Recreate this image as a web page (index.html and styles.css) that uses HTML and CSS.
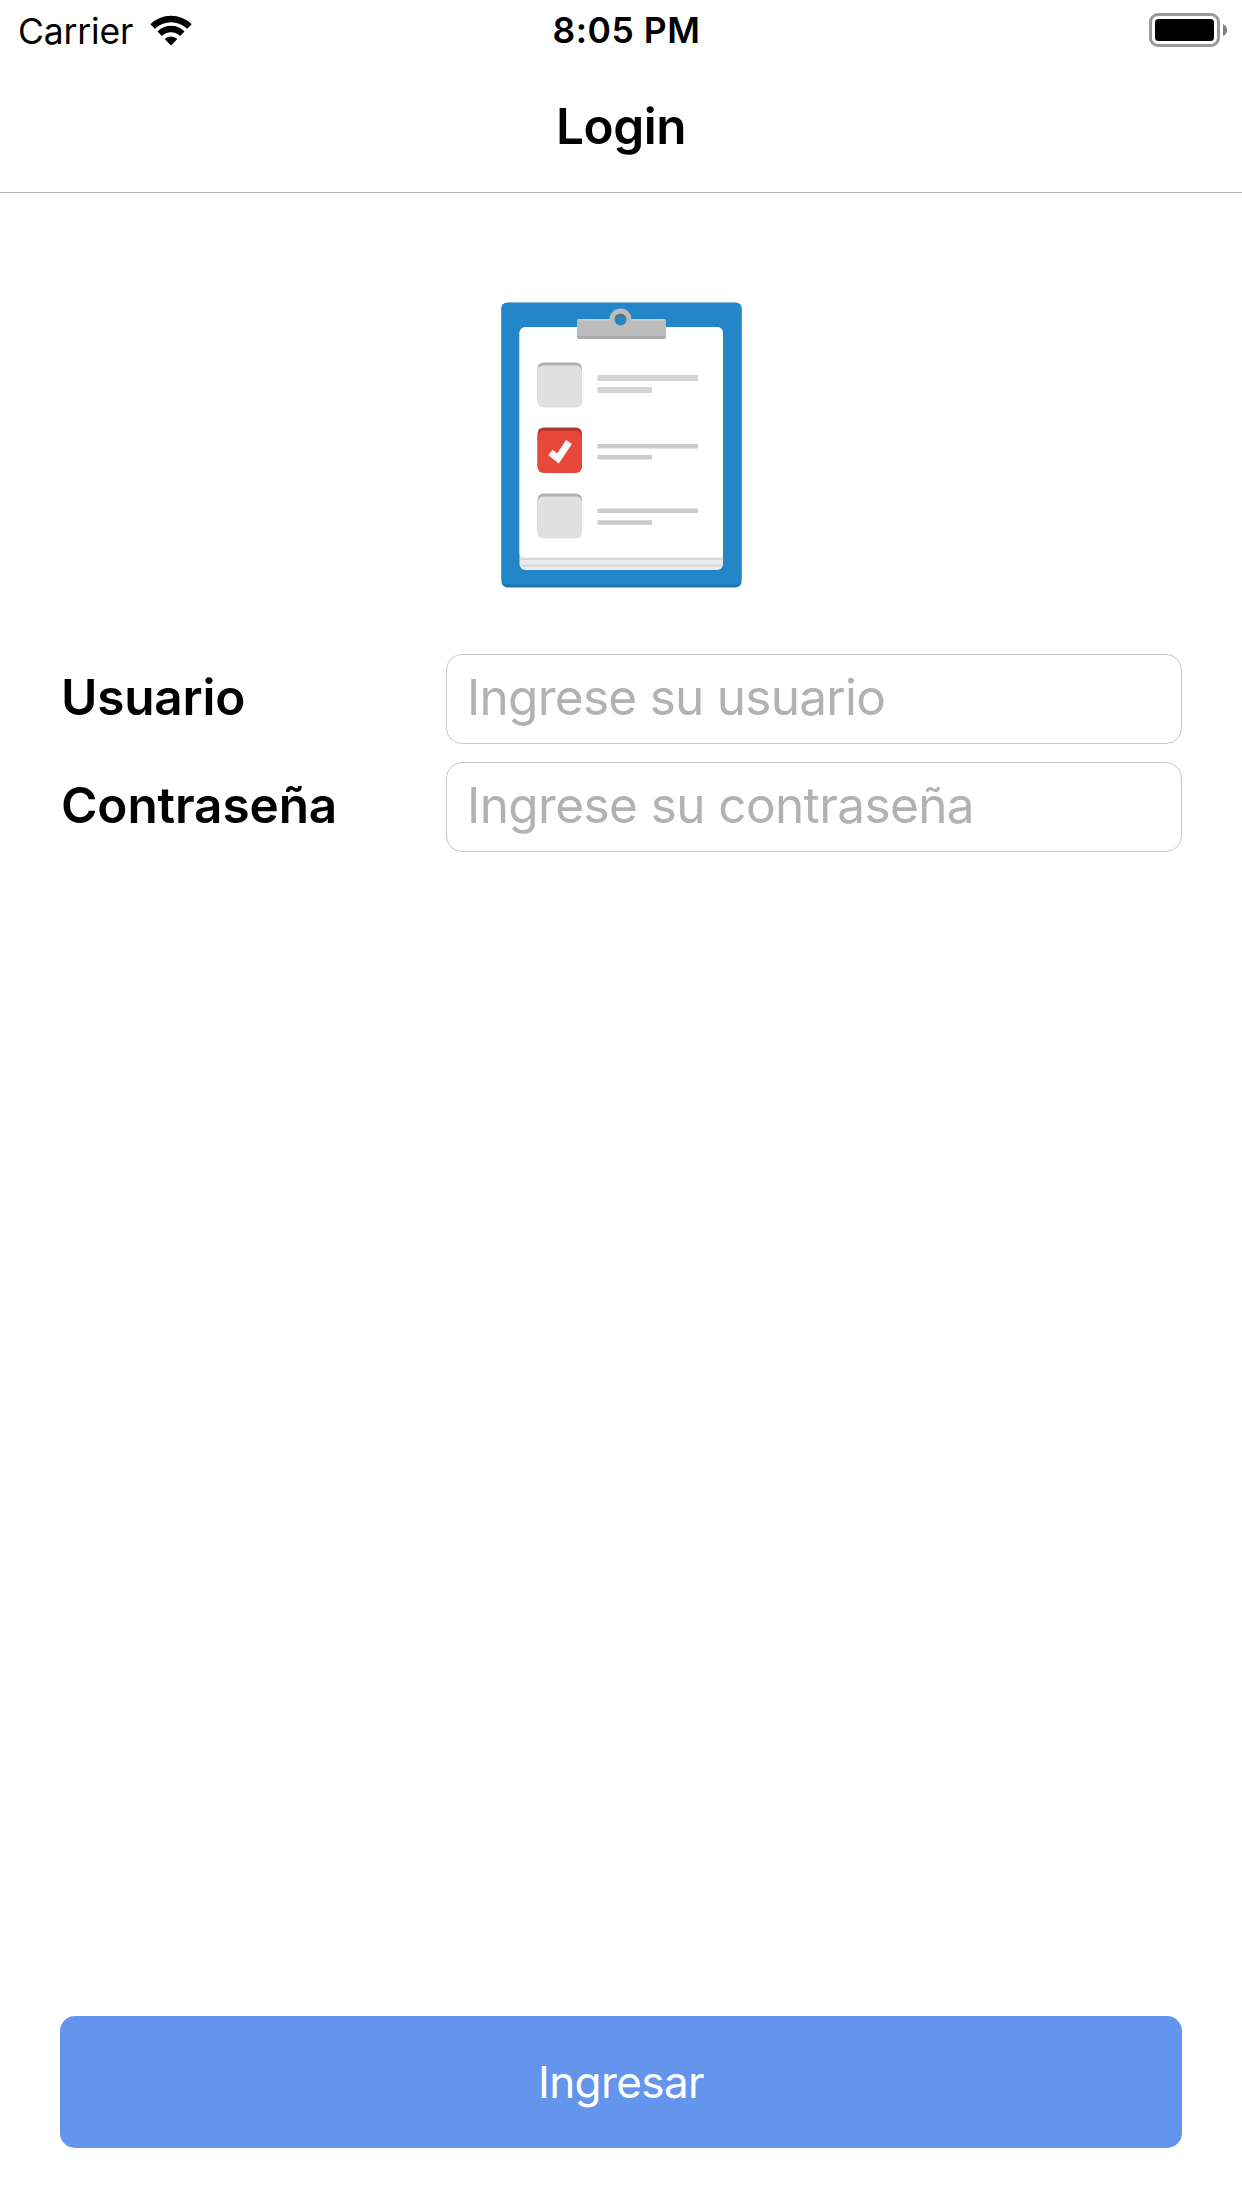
FILE: index.html
```
<!DOCTYPE html>
<html lang="es">
<head>
<meta charset="utf-8">
<title>Login</title>
<link rel="stylesheet" href="styles.css">
</head>
<body>
<div class="screen">
  <div class="status-bar">
    <div class="status-left">
      <span class="carrier">Carrier</span>
      <svg class="wifi" width="44" height="32" viewBox="-22 -30 44 32">
        <path d="M-18.4-18.4A26 26 0 0 1 18.4-18.4M-11.3-11.3A16 16 0 0 1 11.3-11.3" fill="none" stroke="#000" stroke-width="6.4"/>
        <path d="M0 .5-6.4-5.9A9 9 0 0 1 6.4-5.9Z"/>
      </svg>
    </div>
    <span class="clock">8:05 PM</span>
    <div class="status-right">
      <svg width="80" height="34" viewBox="0 0 80 34">
        <rect x="1.5" y="1.5" width="68" height="31" rx="7.5" fill="none" stroke="#999" stroke-width="3"/>
        <rect x="6" y="6" width="59" height="22" rx="3.5"/>
        <path d="M74 11Q78 13 78 17T74 23Z" fill="#808080"/>
      </svg>
    </div>
  </div>
  <header class="nav-bar"><h1 class="nav-title">Login</h1></header>
  <main class="content">
    <svg class="logo" width="264" height="300" viewBox="489 294 264 300">
      <rect x="501.500" y="302.500" width="240" height="285" rx="6" fill="#1b75b3"/>
      <rect x="501.500" y="303" width="240" height="281.500" rx="5" fill="#2386c8"/>
      <rect x="519.500" y="327" width="203.500" height="243" rx="6" fill="#ececec"/>
      <path d="M520 559H722.500M521 565.500H721.500" stroke="#d6d6d6" stroke-width="2"/>
      <path d="M525.500 327H717A6 6 0 0 1 723 333V552Q723 557.500 718 557.500H524.500Q519.500 557.500 519.500 552V333A6 6 0 0 1 525.500 327Z" fill="#fff"/>
      <rect x="577" y="319" width="89" height="20" rx="2" fill="#a9a9a9"/>
      <rect x="577" y="319" width="89" height="17" rx="2" fill="#bcbcbc"/>
      <path d="M578.500 319.800H664.500" stroke="#d0cbc8" stroke-width="1.600"/>
      <circle cx="620.500" cy="319.500" r="11" fill="#bcbcbc"/>
      <circle cx="620.500" cy="319.500" r="6" fill="#2386c8"/>
      <path d="M614.800 318.500A6 6 0 0 1 626.200 318.500Q620.500 314.500 614.800 318.500Z" fill="#666c72"/>
      <rect x="537.500" y="362.500" width="44.500" height="43" rx="6" fill="#b0b0b0"/>
      <rect x="537.500" y="365.500" width="44.500" height="42" rx="6" fill="#e0e0e0"/>
      <rect x="537.500" y="427.500" width="44.500" height="43" rx="6" fill="#b9382d"/>
      <rect x="537.500" y="431" width="44.500" height="42" rx="6" fill="#e8483a"/>
      <path d="M550.500 452.500L558 458.500L569 442" fill="none" stroke="#fff" stroke-width="7"/>
      <rect x="537.500" y="493.500" width="44.500" height="43" rx="6" fill="#b0b0b0"/>
      <rect x="537.500" y="496.500" width="44.500" height="42" rx="6" fill="#e0e0e0"/>
      <path d="M597.500 378H698M597.500 390H652" stroke="#d5d5d5" stroke-width="6"/>
      <path d="M597.500 446.200H698M597.500 457.300H652M597.500 510.700H698M597.500 522.500H652" stroke="#cbcbcb" stroke-width="4.600"/>
    </svg>
    <form class="form">
      <div class="row">
        <label class="label label-user" for="user">Usuario</label>
        <input class="field field-user" id="user" type="text" placeholder="Ingrese su usuario">
      </div>
      <div class="row">
        <label class="label label-pass" for="pass">Contraseña</label>
        <input class="field field-pass" id="pass" type="password" placeholder="Ingrese su contraseña">
      </div>
    </form>
    <button class="submit" type="button">Ingresar</button>
  </main>
</div>
</body>
</html>
```
FILE: styles.css
```
* { box-sizing: border-box; }

body {
  margin: 0;
  background: #fff;
  color: #000;
  font-family: Inter, "Liberation Sans", sans-serif;
}

.screen {
  display: flex;
  flex-direction: column;
  width: 1242px;
  height: 2208px;
}

.status-bar {
  display: grid;
  grid-template-columns: 1fr auto 1fr;
  align-items: center;
  height: 60px;
  padding: 2px 13px 0 18px;
  line-height: 58px;
}

.status-left { display: flex; align-items: center; gap: 16px; }
.status-right { display: flex; justify-content: flex-end; padding-bottom: 3px; }
.wifi { margin-top: -1px; }
.carrier { font-size: 35.5px; letter-spacing: -0.15px; }
.clock {
  margin-left: 6px;
  padding-bottom: 1px;
  font-size: 35.5px;
  font-weight: 600;
  letter-spacing: 0.5px;
}

.nav-bar {
  display: flex;
  align-items: center;
  justify-content: center;
  height: 133px;
  border-bottom: 1px solid #b2b2b2;
}

.nav-title {
  margin: 0;
  font-size: 49.5px;
  font-weight: 600;
  letter-spacing: -0.45px;
  line-height: 60px;
}

.content {
  display: flex;
  flex: 1;
  flex-direction: column;
  padding: 101px 60px 60px;
}

/* The logo artwork has softened edges */
.logo { align-self: center; filter: blur(0.7px); }

.form {
  display: flex;
  flex-direction: column;
  gap: 18px;
  margin-top: 60px;
}

.row {
  display: grid;
  grid-template-columns: 386px 1fr;
  align-items: center;
  height: 90px;
}

.label {
  padding: 0 0 4px 1px;
  font-size: 49.5px;
  font-weight: 600;
  line-height: 60px;
}

.label-user { letter-spacing: -0.2px; }
.label-pass { letter-spacing: -0.1px; }

.field {
  width: 100%;
  height: 90px;
  padding: 0 20px 4px;
  border: 1px solid #c8c8c8;
  border-radius: 16px;
  background: #fff;
  font-family: inherit;
  font-size: 49.5px;
}

.field::placeholder { color: #b2b2b2; opacity: 1; }
.field-user { letter-spacing: -0.73px; }
.field-pass { letter-spacing: -0.6px; }

.submit {
  height: 132px;
  margin-top: auto;
  padding: 0;
  border: 0;
  border-radius: 15px;
  background: #6495ed;
  color: #fff;
  font-family: inherit;
  font-size: 44px;
  letter-spacing: -0.6px;
}
```
